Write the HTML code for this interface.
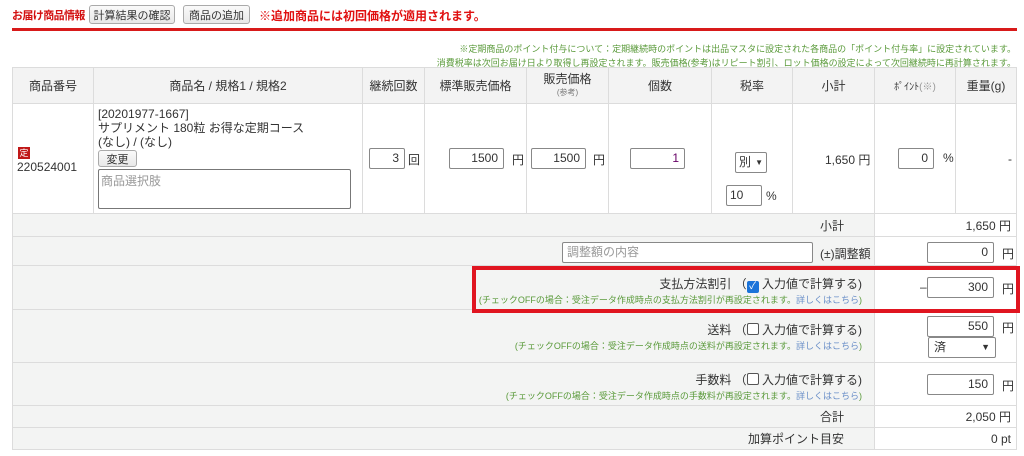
<!DOCTYPE html>
<html><head><meta charset="utf-8"><style>
*{box-sizing:border-box;margin:0;padding:0}
body{width:1024px;height:456px;background:#fff;font-family:"Liberation Sans","Noto Sans CJK JP",sans-serif;font-size:12px;color:#333;position:relative;overflow:hidden}
.a{position:absolute;white-space:nowrap}
.c{position:absolute;border:1px solid #dcdcdc;display:flex;align-items:center;justify-content:center;text-align:center}
.h{background:#f3f3f3}
.g{background:#f3f4f3}
.w{background:#fff}
.btn{position:absolute;border:1px solid #aaa;border-radius:3px;background:linear-gradient(#fafafa,#e8e8e8);font-size:11px;color:#333;display:flex;align-items:center;justify-content:center;white-space:nowrap}
.in{position:absolute;border:1px solid #888;border-radius:2px;background:#fff;text-align:right;padding-right:5px;font-size:12px;line-height:19px;height:21px;white-space:nowrap}
.gr{color:#5a9a3a;font-size:9px}
.lk{color:#6a8fc8}
.cb{display:inline-block;width:12px;height:12px;border:1px solid #555;border-radius:2px;vertical-align:-1px;background:#fff}
</style></head><body>
<div class="a" style="left:12px;top:7px;color:#d31010;font-weight:bold;font-size:11px;letter-spacing:-0.6px">お届け商品情報</div>
<div class="btn" style="left:89px;top:5px;width:86px;height:19px">計算結果の確認</div>
<div class="btn" style="left:183px;top:5px;width:67px;height:19px">商品の追加</div>
<div class="a" style="left:259px;top:7px;color:#e01010;font-weight:bold;font-size:12px">※追加商品には初回価格が適用されます。</div>
<div class="a" style="left:12px;top:28px;width:1005px;height:3px;background:#d81a1a"></div>
<div class="a gr" style="right:8px;top:42px;text-align:right;line-height:14px">※定期商品のポイント付与について：定期継続時のポイントは出品マスタに設定された各商品の「ポイント付与率」に設定されています。<br>消費税率は次回お届け日より取得し再設定されます。販売価格(参考)はリピート割引、ロット価格の設定によって次回継続時に再計算されます。</div>

<div class="c h" style="left:12px;top:67px;width:82px;height:37px">商品番号</div>
<div class="c h" style="left:93px;top:67px;width:270px;height:37px">商品名 / 規格1 / 規格2</div>
<div class="c h" style="left:362px;top:67px;width:63px;height:37px">継続回数</div>
<div class="c h" style="left:424px;top:67px;width:103px;height:37px">標準販売価格</div>
<div class="c h" style="left:526px;top:67px;width:83px;height:37px;flex-direction:column;line-height:13px">販売価格<span style="font-size:8px;color:#777">(参考)</span></div>
<div class="c h" style="left:608px;top:67px;width:104px;height:37px">個数</div>
<div class="c h" style="left:711px;top:67px;width:82px;height:37px">税率</div>
<div class="c h" style="left:792px;top:67px;width:83px;height:37px">小計</div>
<div class="c h" style="left:874px;top:67px;width:82px;height:37px;font-size:10px">ﾎﾟｲﾝﾄ<span style="color:#999">(※)</span></div>
<div class="c h" style="left:955px;top:67px;width:62px;height:37px">重量(g)</div>

<div class="c w" style="left:12px;top:103px;width:82px;height:111px"></div>
<div class="a" style="left:18px;top:147px;width:12px;height:12px;background:#c01818;color:#fff;font-size:9px;line-height:12px;text-align:center">定</div>
<div class="a" style="left:17px;top:160px">220524001</div>
<div class="c w" style="left:93px;top:103px;width:270px;height:111px"></div>
<div class="a" style="left:98px;top:107px;line-height:14px">[20201977-1667]<br>サプリメント 180粒 お得な定期コース<br>(なし) / (なし)</div>
<div class="btn" style="left:98px;top:150px;width:39px;height:17px">変更</div>
<div class="a" style="left:98px;top:169px;width:253px;height:40px;border:1px solid #777;border-radius:2px;color:#999;padding:2px 2px;font-size:12px">商品選択肢</div>
<div class="c w" style="left:362px;top:103px;width:63px;height:111px"></div>
<div class="in" style="left:369px;top:148px;width:36px">3</div><div class="a" style="left:408px;top:151px">回</div>
<div class="c w" style="left:424px;top:103px;width:103px;height:111px"></div>
<div class="in" style="left:449px;top:148px;width:55px">1500</div><div class="a" style="left:512px;top:151px">円</div>
<div class="c w" style="left:526px;top:103px;width:83px;height:111px"></div>
<div class="in" style="left:531px;top:148px;width:55px">1500</div><div class="a" style="left:593px;top:151px">円</div>
<div class="c w" style="left:608px;top:103px;width:104px;height:111px"></div>
<div class="in" style="left:630px;top:148px;width:55px;color:#606">1</div>
<div class="c w" style="left:711px;top:103px;width:82px;height:111px"></div>
<div class="in" style="left:735px;top:152px;width:32px;text-align:left;padding-left:3px;padding-right:0">別<span style="position:absolute;right:3px;font-size:8px">▼</span></div>
<div class="in" style="left:726px;top:185px;width:36px;text-align:left;padding-left:3px">10</div><div class="a" style="left:766px;top:189px">%</div>
<div class="c w" style="left:792px;top:103px;width:83px;height:111px"></div>
<div class="a" style="left:825px;top:151px">1,650 円</div>
<div class="c w" style="left:874px;top:103px;width:82px;height:111px"></div>
<div class="in" style="left:898px;top:148px;width:36px">0</div><div class="a" style="left:943px;top:151px">%</div>
<div class="c w" style="left:955px;top:103px;width:62px;height:111px;justify-content:flex-end;padding-right:4px">-</div>

<div class="c g" style="left:12px;top:213px;width:863px;height:24px;justify-content:flex-end;padding-right:30px">小計</div>
<div class="c w" style="left:874px;top:213px;width:143px;height:24px;justify-content:flex-end;padding-right:5px">1,650 円</div>

<div class="c g" style="left:12px;top:236px;width:863px;height:30px"></div>
<div class="a" style="left:562px;top:242px;width:251px;height:21px;border:1px solid #888;border-radius:2px;background:#fff;color:#999;padding-left:4px;line-height:19px">調整額の内容</div>
<div class="a" style="left:820px;top:245px">(±)調整額</div>
<div class="c w" style="left:874px;top:236px;width:143px;height:30px"></div>
<div class="in" style="left:927px;top:242px;width:67px">0</div><div class="a" style="left:1002px;top:245px">円</div>

<div class="c g" style="left:12px;top:265px;width:863px;height:45px"></div>
<div class="c w" style="left:874px;top:265px;width:143px;height:45px"></div>
<div class="a" style="right:162px;top:275px;text-align:right;font-size:12px">支払方法割引 （<span class="cb" style="background:#1a73d9;border-color:#1a73d9;color:#fff;font-size:10px;line-height:10px;text-align:center">✓</span> 入力値で計算する)</div>
<div class="a gr" style="right:162px;top:293px">(チェックOFFの場合：受注データ作成時点の支払方法割引が再設定されます。<span class="lk">詳しくはこちら</span>)</div>
<div class="a" style="left:920px;top:280px">–</div>
<div class="in" style="left:927px;top:277px;width:67px">300</div><div class="a" style="left:1002px;top:280px">円</div>

<div class="c g" style="left:12px;top:309px;width:863px;height:54px"></div>
<div class="c w" style="left:874px;top:309px;width:143px;height:54px"></div>
<div class="a" style="right:162px;top:321px;font-size:12px">送料 （<span class="cb"></span> 入力値で計算する)</div>
<div class="a gr" style="right:162px;top:339px">(チェックOFFの場合：受注データ作成時点の送料が再設定されます。<span class="lk">詳しくはこちら</span>)</div>
<div class="in" style="left:927px;top:316px;width:67px">550</div><div class="a" style="left:1002px;top:319px">円</div>
<div class="in" style="left:928px;top:337px;width:68px;text-align:left;padding-left:5px">済<span style="position:absolute;right:5px;font-size:9px">▼</span></div>

<div class="c g" style="left:12px;top:362px;width:863px;height:44px"></div>
<div class="c w" style="left:874px;top:362px;width:143px;height:44px"></div>
<div class="a" style="right:162px;top:371px;font-size:12px">手数料 （<span class="cb"></span> 入力値で計算する)</div>
<div class="a gr" style="right:162px;top:389px">(チェックOFFの場合：受注データ作成時点の手数料が再設定されます。<span class="lk">詳しくはこちら</span>)</div>
<div class="in" style="left:927px;top:374px;width:67px">150</div><div class="a" style="left:1002px;top:377px">円</div>

<div class="c g" style="left:12px;top:405px;width:863px;height:23px;justify-content:flex-end;padding-right:30px">合計</div>
<div class="c w" style="left:874px;top:405px;width:143px;height:23px;justify-content:flex-end;padding-right:5px">2,050 円</div>
<div class="c g" style="left:12px;top:427px;width:863px;height:23px;justify-content:flex-end;padding-right:30px">加算ポイント目安</div>
<div class="c w" style="left:874px;top:427px;width:143px;height:23px;justify-content:flex-end;padding-right:5px">0 pt</div>

<div class="a" style="left:472px;top:266px;width:548px;height:47px;border:4px solid #e01520;z-index:10"></div>
</body></html>
